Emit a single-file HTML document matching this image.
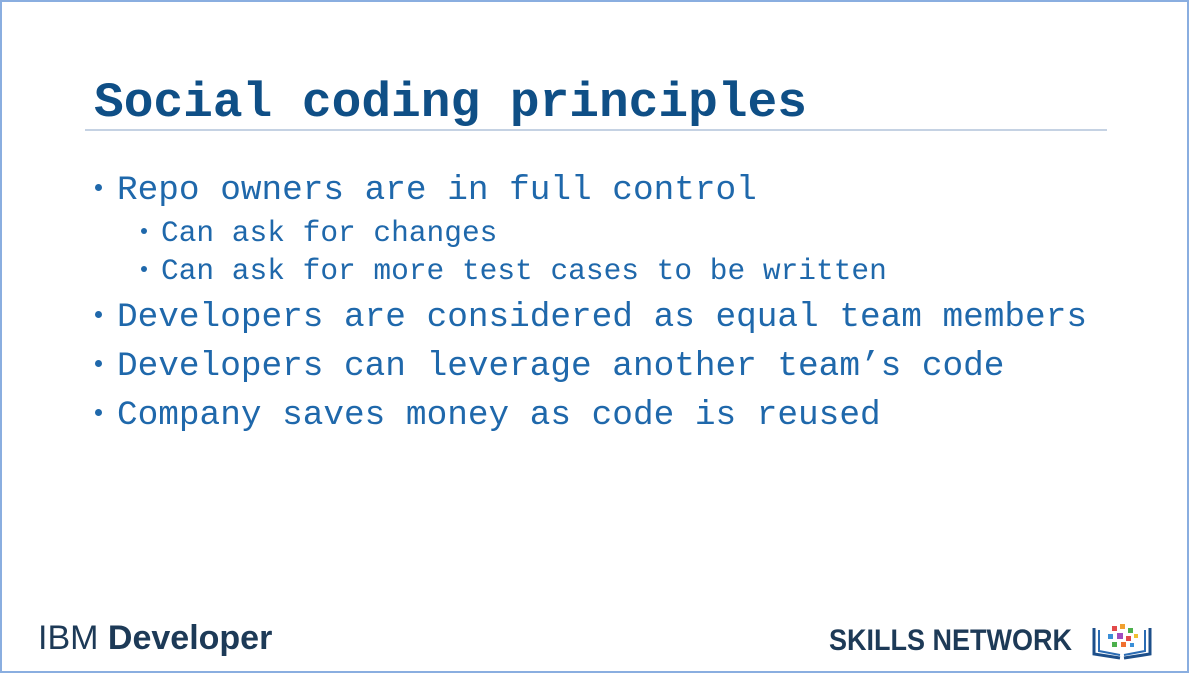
<!DOCTYPE html>
<html><head><meta charset="utf-8"><style>
html,body{margin:0;padding:0}
body{width:1189px;height:673px;position:relative;background:#fff;overflow:hidden;font-family:"Liberation Mono",monospace}
.frame{position:absolute;left:0;top:0;width:1185px;height:669px;border:2px solid #8aaee0}
.t{position:absolute;white-space:nowrap;color:#1f68ab;line-height:1}
h1{position:absolute;left:94px;top:79px;margin:0;font-size:49.5px;font-weight:bold;color:#0f4f86;line-height:1;white-space:nowrap}
.rule{position:absolute;left:85px;top:129px;width:1022px;height:2px;background:#c5d2e3}
.m{font-size:34.4px}
.s{font-size:29.5px}
.b{position:absolute;border-radius:50%;background:#1f68ab}
.ibm{position:absolute;left:38px;top:619px;font-family:"Liberation Sans",sans-serif;font-size:34px;color:#1d3a57;transform:scaleX(1.0);transform-origin:left;white-space:nowrap}
.sk{position:absolute;left:829px;top:624px;font-family:"Liberation Sans",sans-serif;font-weight:bold;font-size:30px;color:#1d3a57;transform:scaleX(0.9);transform-origin:left;white-space:nowrap}
</style></head><body>
<div class="frame"></div>
<h1>Social coding principles</h1>
<div class="rule"></div>
<div class="b" style="left:95px;top:184px;width:7px;height:7px"></div>
<div class="t m" style="left:117px;top:174px">Repo owners are in full control</div>
<div class="b" style="left:141px;top:228px;width:6px;height:6px"></div>
<div class="t s" style="left:161px;top:219px">Can ask for changes</div>
<div class="b" style="left:141px;top:266px;width:6px;height:6px"></div>
<div class="t s" style="left:161px;top:257px">Can ask for more test cases to be written</div>
<div class="b" style="left:95px;top:311px;width:7px;height:7px"></div>
<div class="t m" style="left:117px;top:301px">Developers are considered as equal team members</div>
<div class="b" style="left:95px;top:360px;width:7px;height:7px"></div>
<div class="t m" style="left:117px;top:350px">Developers can leverage another team’s code</div>
<div class="b" style="left:95px;top:409px;width:7px;height:7px"></div>
<div class="t m" style="left:117px;top:399px">Company saves money as code is reused</div>
<div class="ibm">IBM <b>Developer</b></div>
<div class="sk">SKILLS NETWORK</div>
<svg style="position:absolute;left:1090px;top:622px" width="64" height="40" viewBox="0 0 64 40">
<path d="M4 6 V32 L30 36 M60 6 V32 L34 36" fill="none" stroke="#1d4f8a" stroke-width="3"/>
<path d="M9 8 V29 L30 33 M55 8 V29 L34 33" fill="none" stroke="#2a6bb3" stroke-width="2"/>
<rect x="22" y="4" width="5" height="5" fill="#e24a4a"/><rect x="30" y="2" width="5" height="5" fill="#f0a030"/>
<rect x="38" y="6" width="5" height="5" fill="#4cb04c"/><rect x="18" y="12" width="5" height="5" fill="#3a8fd8"/>
<rect x="27" y="11" width="6" height="6" fill="#a04cc0"/><rect x="36" y="14" width="5" height="5" fill="#e24a4a"/>
<rect x="44" y="12" width="4" height="4" fill="#f0c030"/><rect x="22" y="20" width="5" height="5" fill="#4cb04c"/>
<rect x="31" y="20" width="5" height="5" fill="#f07030"/><rect x="40" y="21" width="4" height="4" fill="#3a8fd8"/>
</svg>
</body></html>
